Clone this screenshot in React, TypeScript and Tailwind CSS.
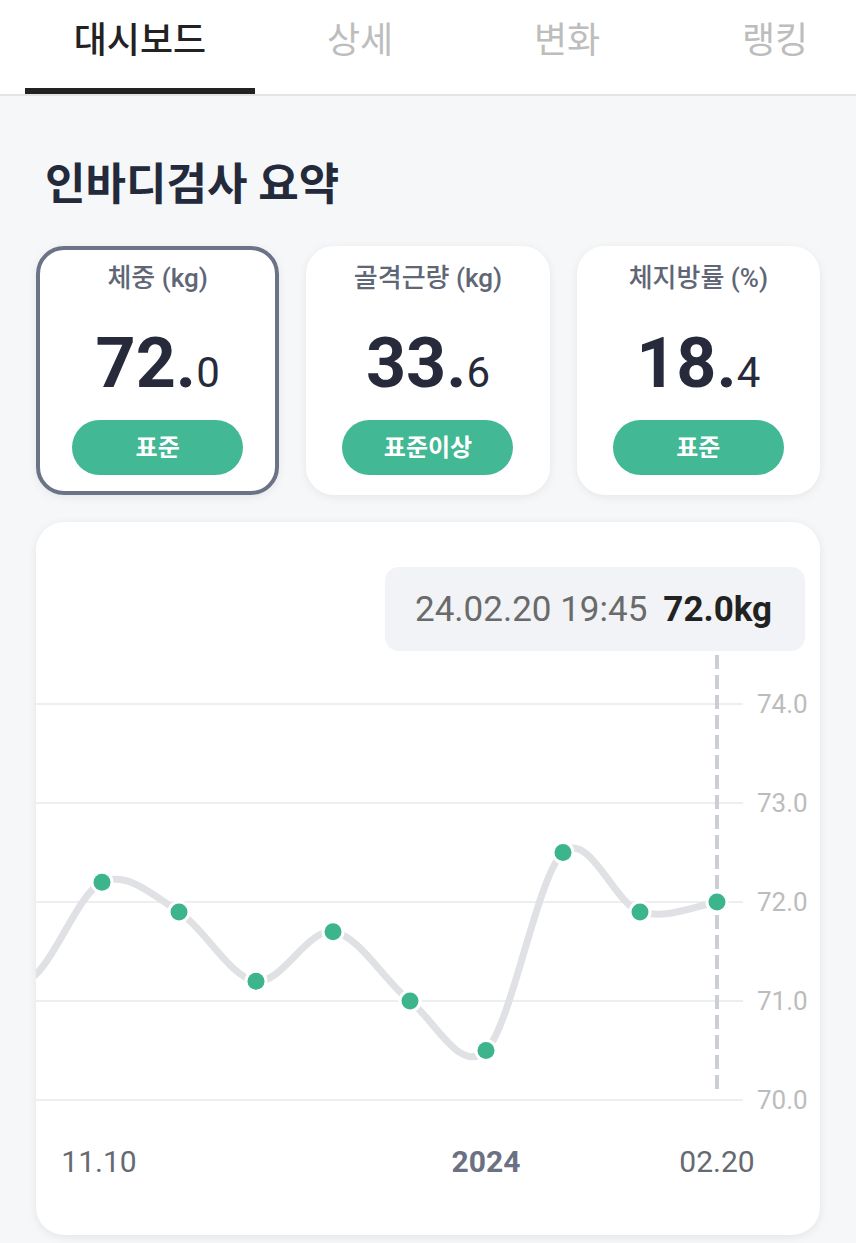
import React from "react";

const FONT = "Roboto, 'Noto Sans CJK KR', 'Noto Sans', sans-serif";

type Pt = [number, number];

const xs = [-88, -11, 66, 143, 220, 297, 374, 450, 527, 604, 681];
const vals = [71.8, 71.2, 72.2, 71.9, 71.2, 71.7, 71.0, 70.5, 72.5, 71.9, 72.0];
const toY = (v: number) => 449 - (v - 70) * 99;
const pts: Pt[] = xs.map((x, i) => [x, toY(vals[i])]);

function catmull(points: Pt[]): string {
  let d = `M ${points[0][0]} ${points[0][1]}`;
  for (let i = 0; i < points.length - 1; i++) {
    const p0 = points[i - 1] || points[i];
    const p1 = points[i];
    const p2 = points[i + 1];
    const p3 = points[i + 2] || p2;
    const c1x = p1[0] + (p2[0] - p0[0]) / 6;
    const c1y = p1[1] + (p2[1] - p0[1]) / 6;
    const c2x = p2[0] - (p3[0] - p1[0]) / 6;
    const c2y = p2[1] - (p3[1] - p1[1]) / 6;
    d += ` C ${c1x} ${c1y} ${c2x} ${c2y} ${p2[0]} ${p2[1]}`;
  }
  return d;
}

function Tabs() {
  const tabs = [
    { label: "대시보드", w: "w-[230px]", active: true },
    { label: "상세", w: "w-[210px]", active: false },
    { label: "변화", w: "w-[204px]", active: false },
    { label: "랭킹", w: "w-[212px]", active: false },
  ];
  return (
    <div className="flex h-[96px] overflow-hidden border-b-2 border-[#e4e4e4] bg-white pl-[25px]">
      {tabs.map((t) => (
        <div key={t.label} className={`flex shrink-0 flex-col ${t.w}`}>
          <div
            className={`flex flex-1 items-start justify-center pt-[16px] text-[36px] leading-[50px] ${
              t.active ? "font-medium text-[#222222]" : "font-normal text-[#bdbdbd]"
            }`}
          >
            {t.label}
          </div>
          <div className={`h-[6px] ${t.active ? "bg-[#222222]" : "bg-transparent"}`} />
        </div>
      ))}
    </div>
  );
}

function StatCard({
  label,
  int,
  dec,
  badge,
  active,
}: {
  label: string;
  int: string;
  dec: string;
  badge: string;
  active?: boolean;
}) {
  return (
    <div
      className={`flex h-[249px] flex-col items-center rounded-[28px] border-4 bg-white shadow-[0_2px_10px_rgba(0,0,0,0.07)] ${
        active ? "border-[#6b7386]" : "border-white"
      }`}
    >
      <div className="mt-[12px] text-[26px] font-medium leading-[32px] text-[#5f6675]">{label}</div>
      <div className="mt-[34px] text-[70px] font-bold leading-[70px] text-[#262a3b]">
        {int}
        <span className="text-[42px] font-normal leading-none">{dec}</span>
      </div>
      <div className="mt-[22px] flex h-[55px] w-[171px] items-center justify-center rounded-full bg-[#43b894] text-[24px] font-bold text-white">
        {badge}
      </div>
    </div>
  );
}

function Chart() {
  const grid = [53, 152, 251, 350, 449];
  const labels = ["74.0", "73.0", "72.0", "71.0", "70.0"];
  const visible = pts.slice(2);
  return (
    <svg width="784" height="560" viewBox="0 0 784 560" className="block">
      {grid.map((y) => (
        <line key={y} x1={0} x2={707} y1={y} y2={y} stroke="#eceef0" strokeWidth={2} />
      ))}
      {grid.map((y, i) => (
        <text
          key={`l${y}`}
          x={721}
          y={y}
          dominantBaseline="central"
          fontSize={26}
          fill="#bcbcbc"
          fontFamily={FONT}
        >
          {labels[i]}
        </text>
      ))}
      <path d={catmull(pts)} fill="none" stroke="#dfe1e4" strokeWidth={7} strokeLinecap="round" />
      <line x1={681} x2={681} y1={4} y2={444} stroke="#cbced2" strokeWidth={4} strokeDasharray="14 6" />
      {visible.map(([x, y], i) => (
        <g key={i}>
          <circle cx={x} cy={y} r={11.5} fill="#ffffff" />
          <circle cx={x} cy={y} r={8.5} fill="#3db58c" />
        </g>
      ))}
      <text x={63} y={510} textAnchor="middle" dominantBaseline="central" fontSize={30} fill="#666a70" fontFamily={FONT}>
        11.10
      </text>
      <text
        x={450}
        y={510}
        textAnchor="middle"
        dominantBaseline="central"
        fontSize={30}
        fontWeight={700}
        fill="#6b7182"
        fontFamily={FONT}
      >
        2024
      </text>
      <text x={681} y={510} textAnchor="middle" dominantBaseline="central" fontSize={30} fill="#666a70" fontFamily={FONT}>
        02.20
      </text>
    </svg>
  );
}

export default function App() {
  return (
    <div className="min-h-[1243px] w-[856px] bg-[#f6f7f9]" style={{ fontFamily: FONT }}>
      <Tabs />
      <div className="px-[36px] pb-[8px]">
        <h1 className="ml-[9px] mt-[61px] text-[44px] font-bold leading-[56px] text-[#232a3b]">인바디검사 요약</h1>
        <div className="mt-[33px] grid grid-cols-3 gap-[27px]">
          <StatCard label="체중 (kg)" int="72." dec="0" badge="표준" active />
          <StatCard label="골격근량 (kg)" int="33." dec="6" badge="표준이상" />
          <StatCard label="체지방률 (%)" int="18." dec="4" badge="표준" />
        </div>
        <div className="mt-[27px] flex h-[713px] flex-col overflow-hidden rounded-[28px] bg-white shadow-[0_2px_10px_rgba(0,0,0,0.08)]">
          <div className="mr-[15px] mt-[45px] flex h-[84px] w-[420px] items-center self-end rounded-[14px] bg-[#f1f3f6] pl-[30px] text-[35px] leading-none">
            <span className="text-[#6a6a6a]">24.02.20 19:45</span>
            <span className="ml-[16px] font-bold text-[#222222]">72.0kg</span>
          </div>
          <Chart />
        </div>
      </div>
    </div>
  );
}
